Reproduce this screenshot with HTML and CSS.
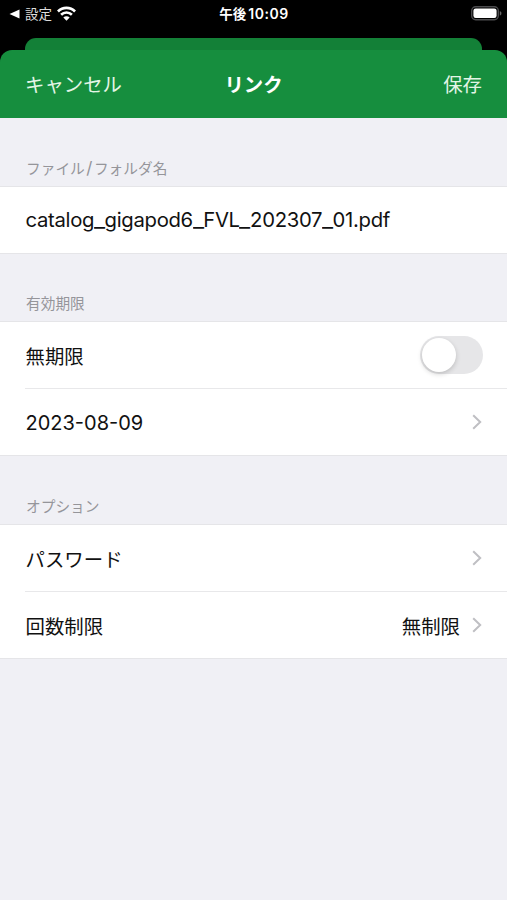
FILE: index.html
```html
<!DOCTYPE html>
<html lang="ja">
<head>
<meta charset="utf-8">
<title>リンク</title>
<link rel="stylesheet" href="styles.css">
</head>
<body>
<div class="status">
  <div class="status-left">
    <svg class="back" viewBox="0 0 11 10"><path d="M10.5 .6v8.8L.5 5z"/></svg>
    <span class="back-label">設定</span>
    <svg class="wifi" viewBox="0 0 18 14"><g fill="none" stroke="#fff" stroke-width="2.5"><path d="M.9 5.1a11.4 11.4 0 0 1 16.2 0"/><path d="M3.9 8.2a7.2 7.2 0 0 1 10.2 0"/></g><path d="M6 10.9a4.3 4.3 0 0 1 6 0l-3 3z" fill="#fff"/></svg>
  </div>
  <div class="time"><span>午後</span><span class="clock">10:09</span></div>
  <svg class="battery" viewBox="0 0 31 15"><rect x=".7" y=".7" width="26.6" height="13" rx="4" fill="none" stroke="#4c4c4e" stroke-width="1.4"/><rect x="2.4" y="2.4" width="23.2" height="9.6" rx="2.3" fill="#fff"/><path d="M28.8 4.9c2.2.9 2.2 3.7 0 4.6z" fill="#666"/></svg>
</div>
<div class="back-card"></div>
<header class="navbar">
  <span class="cancel">キャンセル</span>
  <span class="title">リンク</span>
  <span class="save">保存</span>
</header>
<main>
  <section>
    <h2 class="caption">ファイル<span class="slash">/</span>フォルダ名</h2>
    <div class="group">
      <div class="row"><span class="filename">catalog<i>_</i>gigapod6<i>_</i>FVL<i>_</i>202307<i>_</i>01.pdf</span></div>
    </div>
  </section>
  <section>
    <h2 class="caption caption-short">有効期限</h2>
    <div class="group">
      <div class="row"><span class="label">無期限</span><span class="switch"><span class="knob"></span></span></div>
      <div class="row"><span class="date">2023-08-09</span><svg class="chevron" viewBox="0 0 10 16"><path d="M1.2 1.2 8.2 8l-7 6.8"/></svg></div>
    </div>
  </section>
  <section>
    <h2 class="caption">オプション</h2>
    <div class="group">
      <div class="row"><span class="label">パスワード</span><svg class="chevron" viewBox="0 0 10 16"><path d="M1.2 1.2 8.2 8l-7 6.8"/></svg></div>
      <div class="row"><span class="label">回数制限</span><span class="value">無制限</span><svg class="chevron" viewBox="0 0 10 16"><path d="M1.2 1.2 8.2 8l-7 6.8"/></svg></div>
    </div>
  </section>
</main>
</body>
</html>
```
FILE: styles.css
```css
* { box-sizing: border-box; }
body {
  margin: 0;
  height: 900px;
  overflow: hidden;
  background: linear-gradient(#000 118px, #f0f0f5 118px);
  font-family: Inter, "Noto Sans CJK JP", sans-serif;
  font-size: 19.4px;
  line-height: 28px;
  color: #111;
}
svg { display: block; flex: none; }
.status {
  height: 38px;
  padding: 0 8px 10px 9px;
  display: grid;
  grid-template-columns: 1fr auto 1fr;
  align-items: center;
  color: #fff;
  font-size: 13.5px;
}
.status-left { display: flex; align-items: center; }
.back { width: 11px; height: 10px; fill: #fff; }
.back-label { margin-left: 5px; color: #ddd; line-height: 28px; }
.wifi { width: 19px; height: 15px; margin-left: 5px; margin-top: -2px; }
.time { display: flex; gap: 2px; font-weight: 600; }
.clock { font-size: 14px; letter-spacing: .5px; }
.battery { width: 31px; height: 15px; justify-self: end; margin-right: -3px; margin-top: -1px; }
.back-card {
  height: 32px;
  margin: 0 25px -20px;
  border-radius: 11px 11px 0 0;
  background: #138037;
}
.navbar {
  position: relative;
  height: 68px;
  padding: 2px 25px 0;
  display: grid;
  grid-template-columns: 1fr auto 1fr;
  align-items: center;
  border-radius: 12px 12px 0 0;
  background: #168e3e;
  color: #e3f5e6;
}
.title { color: #fff; font-weight: 700; }
.save { justify-self: end; }
.caption {
  height: 68px;
  margin: 0;
  padding: 37px 25px 0 26px;
  font-size: 14.7px;
  font-weight: 400;
  line-height: 28px;
  color: #95959a;
}
.caption-short { height: 67px; padding-top: 36px; }
.slash { margin: 0 1.5px; font-size: 17px; line-height: 1; }
.group {
  background: #fff;
  border-top: 1px solid #e5e5e8;
  border-bottom: 1px solid #e5e5e8;
}
.row {
  height: 66px;
  padding: 0 25px;
  display: flex;
  align-items: center;
  justify-content: space-between;
}
.row + .row {
  height: 67px;
  border-top: 1px solid #e8e8ea;
  margin-left: 25px;
  padding-left: 0;
}
.label, .value { padding-top: 3px; }
.label { padding-left: .6px; }
.filename, .date { font-size: 20px; padding-left: .5px; }
.date { padding-top: 1px; }
.filename { font-size: 20.3px; letter-spacing: -.3px; }
.filename i {
  display: inline-block;
  font-style: normal;
  transform: scaleX(1.2);
  margin: 0 .7px;
}
.value { margin-left: auto; margin-right: 12px; }
.switch {
  width: 63px;
  height: 38px;
  padding: 2px;
  margin-right: -1px;
  border-radius: 19px;
  background: #e6e6e8;
}
.knob {
  display: block;
  width: 34px;
  height: 34px;
  border-radius: 50%;
  background: #fff;
  box-shadow: 0 2px 5px rgba(0, 0, 0, .18);
}
.chevron { width: 10px; height: 16px; }
.chevron path { fill: none; stroke: #bfbfc3; stroke-width: 2; }
```
